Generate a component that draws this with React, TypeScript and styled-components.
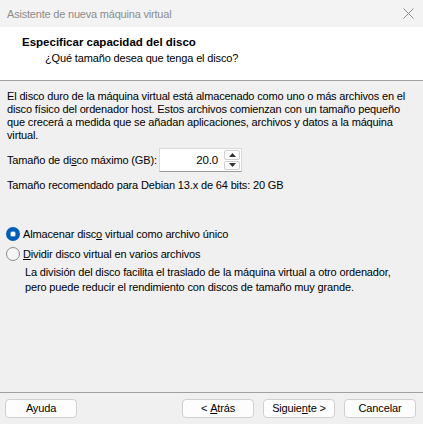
import React from 'react';
import styled, { createGlobalStyle } from 'styled-components';

const Global = createGlobalStyle`
  html, body { margin: 0; padding: 0; }
  body {
    width: 423px;
    height: 424px;
    overflow: hidden;
    background: #f0f0f0;
    font-family: "Segoe UI", "Liberation Sans", Arial, sans-serif;
    font-size: 11px;
    letter-spacing: -0.15px;
    color: #000;
  }
`;

const Window = styled.div`
  width: 423px;
  height: 424px;
  display: flex;
  flex-direction: column;
  background: #f0f0f0;
  white-space: nowrap;
`;

const TitleBar = styled.div`
  height: 27px;
  flex: 0 0 27px;
  display: flex;
  align-items: center;
  justify-content: space-between;
  padding: 0 0 0 7px;
  background: #f3f3f3;
  color: #8c8c8c;
  letter-spacing: -0.2px;
`;

const CloseBtn = styled.div`
  width: 30px;
  height: 27px;
  display: flex;
  align-items: center;
  justify-content: center;
`;

const Header = styled.div`
  height: 54px;
  flex: 0 0 54px;
  background: #fff;
  border-bottom: 1px solid #a0a0a0;
  box-sizing: border-box;
  padding: 7px 0 0 22px;
`;

const HeaderTitle = styled.div`
  font-weight: bold;
  font-size: 11.5px;
  letter-spacing: 0;
  line-height: 16px;
`;

const HeaderSub = styled.div`
  padding-left: 23px;
  line-height: 16px;
`;

const Body = styled.div`
  flex: 1;
  display: flex;
  flex-direction: column;
  padding: 9px 7px 0 7px;
`;

const Para = styled.p`
  margin: 0;
  line-height: 13px;
`;

const SizeRow = styled.div`
  display: flex;
  align-items: center;
  margin-top: 6px;
  height: 24px;
`;

const Label = styled.span`
  width: 152px;
`;

const Spin = styled.div`
  display: flex;
  width: 83px;
  height: 24px;
  box-sizing: border-box;
  background: #fff;
  border: 1px solid #d9d9d9;
  border-bottom-color: #9a9a9a;
`;

const SpinValue = styled.div`
  flex: 1;
  text-align: right;
  padding-right: 6px;
  line-height: 22px;
  font-size: 11.5px;
`;

const SpinArrows = styled.div`
  display: flex;
  flex-direction: column;
  gap: 1px;
  width: 16px;
  padding: 1px 1px 1px 0;
`;

const Arrow = styled.div`
  flex: 1;
  background: #fdfdfd;
  border: 1px solid #cfcfcf;
  border-radius: 2px;
  display: flex;
  align-items: center;
  justify-content: center;
`;

const Recommend = styled.div`
  margin-top: 7px;
  line-height: 13px;
`;

const Options = styled.div`
  margin-top: 35px;
  display: flex;
  flex-direction: column;
  gap: 6px;
`;

const Option = styled.label`
  display: flex;
  align-items: center;
  gap: 3px;
  height: 14px;
  margin-left: -1px;
`;

const Radio = styled.span<{ $on?: boolean }>`
  width: 14px;
  height: 14px;
  box-sizing: border-box;
  border-radius: 50%;
  display: inline-block;
  ${(p) =>
    p.$on
      ? `background: #fff; border: 4px solid #005fb8; box-shadow: inset 0 0 0 0.5px #005fb8;`
      : `background: #f5f5f5; border: 1px solid #8a8a8a;`}
`;

const Note = styled.div`
  margin-top: 4px;
  padding-left: 18px;
  line-height: 15px;
`;

const Footer = styled.div`
  margin-top: auto;
  border-top: 1px solid #a0a0a0;
  display: flex;
  align-items: flex-start;
  padding: 6px 7px 0 5px;
  height: 32px;
  box-sizing: border-box;
`;

const Btn = styled.div<{ $gapLeft?: number }>`
  width: 72px;
  height: 19px;
  box-sizing: border-box;
  margin-left: ${(p) => p.$gapLeft ?? 0}px;
  background: #fdfdfd;
  border: 1px solid #d0d0d0;
  border-radius: 4px;
  display: flex;
  align-items: center;
  justify-content: center;
  line-height: 17px;
  white-space: pre;
`;

const U = styled.span`
  text-decoration: underline;
`;

export default function App() {
  return (
    <Window>
      <Global />
      <TitleBar>
        <span>Asistente de nueva máquina virtual</span>
        <CloseBtn>
          <svg width="11" height="11" viewBox="0 0 11 11">
            <path d="M0.5 0.5 L10.5 10.5 M10.5 0.5 L0.5 10.5" stroke="#8c8c8c" strokeWidth="1" />
          </svg>
        </CloseBtn>
      </TitleBar>
      <Header>
        <HeaderTitle>Especificar capacidad del disco</HeaderTitle>
        <HeaderSub>¿Qué tamaño desea que tenga el disco?</HeaderSub>
      </Header>
      <Body>
        <Para>
          El disco duro de la máquina virtual está almacenado como uno o más archivos en el
          <br />
          disco físico del ordenador host. Estos archivos comienzan con un tamaño pequeño
          <br />
          que crecerá a medida que se añadan aplicaciones, archivos y datos a la máquina
          <br />
          virtual.
        </Para>
        <SizeRow>
          <Label>
            Tamaño de di<U>s</U>co máximo (GB):
          </Label>
          <Spin>
            <SpinValue>20.0</SpinValue>
            <SpinArrows>
              <Arrow>
                <svg width="7" height="4" viewBox="0 0 7 4">
                  <path d="M3.5 0 L7 4 L0 4 Z" fill="#333" />
                </svg>
              </Arrow>
              <Arrow>
                <svg width="7" height="4" viewBox="0 0 7 4">
                  <path d="M0 0 L7 0 L3.5 4 Z" fill="#333" />
                </svg>
              </Arrow>
            </SpinArrows>
          </Spin>
        </SizeRow>
        <Recommend>Tamaño recomendado para Debian 13.x de 64 bits: 20 GB</Recommend>
        <Options>
          <Option>
            <Radio $on />
            <span>
              Almacenar disc<U>o</U> virtual como archivo único
            </span>
          </Option>
          <Option>
            <Radio />
            <span>
              <U>D</U>ividir disco virtual en varios archivos
            </span>
          </Option>
        </Options>
        <Note>
          La división del disco facilita el traslado de la máquina virtual a otro ordenador,
          <br />
          pero puede reducir el rendimiento con discos de tamaño muy grande.
        </Note>
      </Body>
      <Footer>
        <Btn>Ayuda</Btn>
        <Btn $gapLeft={105}>
          {'< '}
          <U>A</U>trás
        </Btn>
        <Btn $gapLeft={9}>
          Siguie<U>n</U>te {'>'}
        </Btn>
        <Btn $gapLeft={9}>Cancelar</Btn>
      </Footer>
    </Window>
  );
}
